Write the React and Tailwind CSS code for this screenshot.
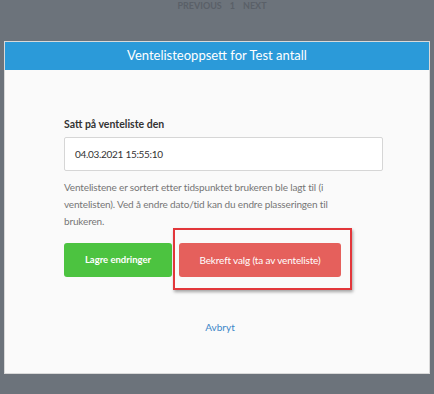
export default function App() {
    return (
        <div className="w-[434px] h-[394px] bg-[#6c737b] overflow-hidden" style={{ fontFamily: "Lato, 'Open Sans', sans-serif" }}>
            {/* PAGINATION (behind overlay) */}
            <div className="h-[41px] flex justify-center gap-2 pl-[10px] text-[9px] font-bold text-[#5a6068] leading-[11px]">
                <span>PREVIOUS</span>
                <span>1</span>
                <span>NEXT</span>
            </div>

            {/* MODAL */}
            <div className="mx-[4px] w-[426px] h-[333px] bg-[#fafafa] border border-[#d9d9d9] flex flex-col">
                <div className="h-[28px] bg-[#2b9ad9] text-white text-[13px] flex items-center justify-center">
                    Ventelisteoppsett for Test antall
                </div>

                <div className="pl-[59px] pr-[46px] pt-[46px] flex flex-col">
                    <label className="text-[10.5px] font-bold text-[#333] leading-[16px]">
                        Satt på venteliste den
                    </label>

                    <div className="mt-[5px] h-[34px] bg-white border border-[#d6d6d6] rounded-[2px] flex items-center pl-[10px] text-[10px] tracking-[-0.3px] text-[#333]">
                        04.03.2021 15:55:10
                    </div>

                    <p className="mt-[8px] w-[282px] text-[10px] tracking-[-0.15px] leading-[17px] text-[#767676]">
                        Ventelistene er sortert etter tidspunktet brukeren ble lagt til (i ventelisten). Ved å endre dato/tid kan du endre plasseringen til brukeren.
                    </p>

                    <div className="mt-[-2px] flex items-start">
                        <button className="mt-[15px] w-[108px] h-[34px] bg-[#4cc340] text-white text-[9.5px] font-bold rounded-[3px]">
                            Lagre endringer
                        </button>
                        <div className="ml-[1px] w-[179px] h-[62px] border-2 border-[#e2363a] shadow-[1px_2px_3px_rgba(0,0,0,0.35)] pl-[4px] pt-[13px]">
                            <button className="w-[162px] h-[34px] bg-[#e5605c] text-white text-[10px] tracking-[-0.15px] rounded-[3px]">
                                Bekreft valg (ta av venteliste)
                            </button>
                        </div>
                    </div>

                    <div className="mt-[28px] ml-[-59px] w-[426px] text-center leading-[14px]">
                        <span className="text-[10px] text-[#3a86c8] ml-[4px]">Avbryt</span>
                    </div>
                </div>
            </div>
        </div>
    );
}
